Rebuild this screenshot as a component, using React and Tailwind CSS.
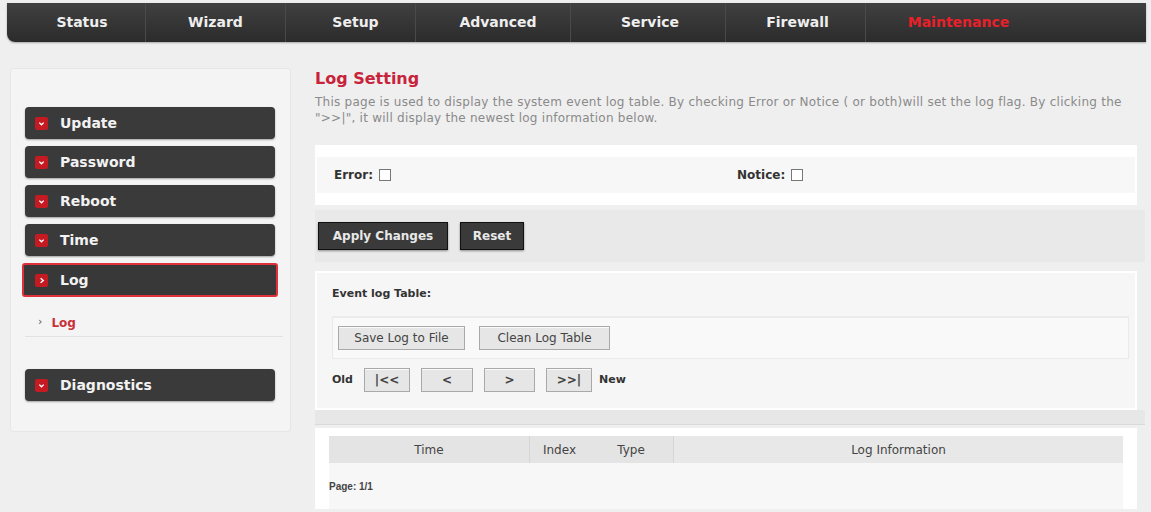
import React from "react";

const navItems = [
  { label: "Status", w: "w-[138px]", pad: "pl-[12px]" },
  { label: "Wizard", w: "w-[140px]", pad: "" },
  { label: "Setup", w: "w-[130px]", pad: "pl-[10px]" },
  { label: "Advanced", w: "w-[155px]", pad: "pl-[10px]" },
  { label: "Service", w: "w-[155px]", pad: "pl-[4px]" },
  { label: "Firewall", w: "w-[140px]", pad: "pl-[4px]" },
  { label: "Maintenance", w: "w-[186px]", pad: "", active: true },
];

const menu = ["Update", "Password", "Reboot", "Time"];

function RedBullet({ open }) {
  return (
    <span className="flex h-[13px] w-[13px] items-center justify-center rounded-[2px] bg-[#c41a22]">
      <svg width="7" height="7" viewBox="0 0 8 8">
        {open ? (
          <path d="M3 1.5 L6 4 L3 6.5" stroke="#fff" strokeWidth="1.6" fill="none" />
        ) : (
          <path d="M1.5 3 L4 5.5 L6.5 3" stroke="#fff" strokeWidth="1.6" fill="none" />
        )}
      </svg>
    </span>
  );
}

function MenuButton({ label, active }) {
  return (
    <div
      className={
        active
          ? "flex h-[34px] w-[256px] items-center gap-[12px] rounded-[3px] border-2 border-[#e0313a] bg-[#383838] pl-[11px] -ml-[3px]"
          : "flex h-[32px] w-[250px] items-center gap-[12px] rounded-[4px] bg-[#3a3a3a] pl-[10px] shadow-[0_1px_2px_rgba(0,0,0,0.35)]"
      }
    >
      <RedBullet open={active} />
      <span className="text-[14px] font-bold text-[#f2f2f2]">{label}</span>
    </div>
  );
}

function GrayButton({ children, w }) {
  return (
    <div
      className={`flex h-[24px] ${w} items-center justify-center border border-[#a9a9a9] bg-[#e6e6e6] text-[12px] text-[#444] shadow-[inset_0_1px_0_#fafafa]`}
    >
      {children}
    </div>
  );
}

export default function App() {
  return (
    <div className="h-[512px] w-[1151px] overflow-hidden bg-[#efefef] font-['DejaVu_Sans',Verdana,sans-serif]">
      {/* top navigation */}
      <div className="ml-[7px] mr-[5px] mt-[3px] flex h-[39px] rounded-bl-[8px] bg-gradient-to-b from-[#404040] to-[#2c2c2c] shadow-[0_1px_2px_rgba(0,0,0,0.3)]">
        {navItems.map((item, i) => (
          <div
            key={item.label}
            className={`flex h-full ${item.w} ${item.pad} items-center justify-center ${i > 0 ? "border-l border-[#4a4a4a]" : ""}`}
          >
            <span
              className={`text-[14px] font-bold ${item.active ? "text-[#e8202a]" : "text-[#eeeeee]"}`}
            >
              {item.label}
            </span>
          </div>
        ))}
      </div>

      <div className="flex">
        {/* side menu */}
        <div className="ml-[10px] mt-[26px] h-[364px] w-[282px] rounded-[3px] border border-[#e6e6e6] bg-[#f4f4f4] pl-[14px] pt-[38px]">
          <div className="flex flex-col gap-[7px]">
            {menu.map((m) => (
              <MenuButton key={m} label={m} />
            ))}
            <MenuButton label="Log" active />
          </div>
          <div className="mt-[12px] flex h-[28px] w-[258px] items-center border-b border-[#e2e2e2] pl-[13px]">
            <span className="mr-[9px] text-[11px] text-[#555]">›</span>
            <span className="text-[12px] font-bold text-[#c8323a]">Log</span>
          </div>
          <div className="mt-[32px]">
            <MenuButton label="Diagnostics" />
          </div>
        </div>

        {/* main content */}
        <div className="ml-[24px] mr-[6px] flex-1">
          <div className="pt-[27px] text-[16px] font-bold leading-[20px] text-[#c8233b]">
            Log Setting
          </div>
          <p className="mt-[5px] w-[830px] text-[12px] leading-[16px] tracking-[0.25px] text-[#8a8a8a]">
            This page is used to display the system event log table. By checking Error or Notice ( or both)will set the log flag. By clicking the
            <br />
            "&gt;&gt;|", it will display the newest log information below.
          </p>

          {/* log flags */}
          <div className="mt-[19px] mr-[8px] h-[60px] bg-white px-[2px] pt-[12px]">
            <div className="flex h-[36px] items-center bg-[#f7f7f7] pl-[17px]">
              <div className="flex w-[403px] items-center gap-[6px]">
                <span className="text-[12px] font-bold text-[#333]">Error:</span>
                <span className="h-[12px] w-[12px] border border-[#777] bg-white" />
              </div>
              <div className="flex items-center gap-[6px]">
                <span className="text-[12px] font-bold text-[#333]">Notice:</span>
                <span className="h-[12px] w-[12px] border border-[#777] bg-white" />
              </div>
            </div>
          </div>

          {/* actions */}
          <div className="mt-[5px] flex h-[52px] items-center gap-[12px] bg-[#e9e9e9] pl-[3px]">
            <div className="flex h-[28px] w-[130px] items-center justify-center border border-[#111] bg-[#3a3a3a] text-[12px] font-bold text-[#e8e8e8] shadow-[0_1px_2px_rgba(0,0,0,0.4)]">
              Apply Changes
            </div>
            <div className="flex h-[28px] w-[64px] items-center justify-center border border-[#111] bg-[#3a3a3a] text-[12px] font-bold text-[#e8e8e8] shadow-[0_1px_2px_rgba(0,0,0,0.4)]">
              Reset
            </div>
          </div>

          {/* event log controls */}
          <div className="mt-[9px] mr-[8px] h-[139px] bg-white px-[2px] pt-[2px]">
            <div className="h-[135px] bg-[#f6f6f6] pl-[15px] pr-[6px]">
              <div className="flex h-[44px] items-center border-b border-[#ececec] text-[11px] font-bold text-[#333]">
                Event log Table:
              </div>
              <div className="flex h-[42px] items-center gap-[14px] border border-[#eaeaea] bg-[#f9f9f9] pl-[5px]">
                <GrayButton w="w-[127px]">Save Log to File</GrayButton>
                <GrayButton w="w-[131px]">Clean Log Table</GrayButton>
              </div>
              <div className="flex h-[42px] items-center gap-[11px] text-[11px] font-bold text-[#333]">
                <span>Old</span>
                <GrayButton w="w-[46px]">|&lt;&lt;</GrayButton>
                <GrayButton w="w-[52px]">&lt;</GrayButton>
                <GrayButton w="w-[51px]">&gt;</GrayButton>
                <GrayButton w="w-[46px]">&gt;&gt;|</GrayButton>
                <span className="-ml-[4px]">New</span>
              </div>
            </div>
          </div>

          <div className="h-[15px] border-b border-[#d9d9d9] bg-[#e7e7e7]" />

          {/* log table */}
          <div className="mt-[3px] mr-[8px] bg-white px-[14px] pt-[8px]">
            <div className="flex h-[27px] items-center bg-[#e4e4e4] text-[12px] text-[#444]">
              <div className="w-[200px] text-center">Time</div>
              <div className="flex h-full w-[60px] items-center justify-center border-l border-[#d6d6d6]">Index</div>
              <div className="flex h-full w-[84px] items-center justify-center">Type</div>
              <div className="flex h-full flex-1 items-center justify-center border-l border-[#d6d6d6] bg-[#e8e8e8]">Log Information</div>
            </div>
            <div className="flex h-[46px] items-center bg-[#f7f7f7] font-['Liberation_Sans',Arial,sans-serif] text-[10px] font-bold text-[#444]">
              Page: 1/1
            </div>
          </div>
        </div>
      </div>
    </div>
  );
}
